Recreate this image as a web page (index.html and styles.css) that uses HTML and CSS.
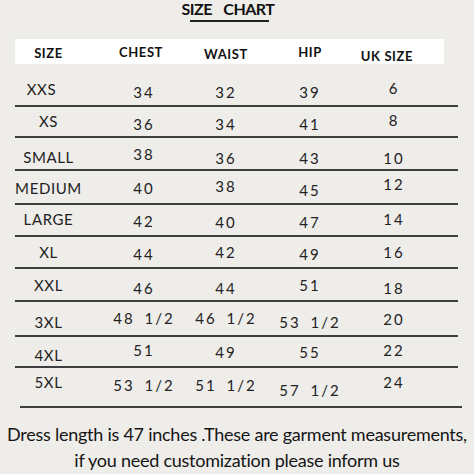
FILE: index.html
```html
<!DOCTYPE html>
<html>
<head>
  <title>Size Chart</title>
  <link rel="stylesheet" href="styles.css">
</head>
<body>
  <div class="title">SIZE CHART</div>
  <div class="title-rule"></div>

  <div class="chart">
    <div class="row head">
      <div class="c1 v8">SIZE</div>
      <div class="v7 nudge-chest">CHEST</div>
      <div class="v9">WAIST</div>
      <div class="v7">HIP</div>
      <div class="v11 nudge-uk">UK SIZE</div>
    </div>

    <div class="row h41">
      <div class="c1 v17 xxs">XXS</div>
      <div class="v20">34</div>
      <div class="v20">32</div>
      <div class="v20">39</div>
      <div class="v16">6</div>
    </div>
    <div class="row h29">
      <div class="c1 v6">XS</div>
      <div class="v9">36</div>
      <div class="v9">34</div>
      <div class="v9">41</div>
      <div class="v5">8</div>
    </div>
    <div class="row h31">
      <div class="c1 v11">SMALL</div>
      <div class="v8">38</div>
      <div class="v12">36</div>
      <div class="v12">43</div>
      <div class="v12">10</div>
    </div>
    <div class="row h32">
      <div class="c1 v9">MEDIUM</div>
      <div class="v9">40</div>
      <div class="v7">38</div>
      <div class="v11">45</div>
      <div class="v5">12</div>
    </div>
    <div class="row h30">
      <div class="c1 v6">LARGE</div>
      <div class="v8">42</div>
      <div class="v9">40</div>
      <div class="v9">47</div>
      <div class="v6">14</div>
    </div>
    <div class="row h30">
      <div class="c1 v7">XL</div>
      <div class="v9">44</div>
      <div class="v7">42</div>
      <div class="v9">49</div>
      <div class="v7">16</div>
    </div>
    <div class="row h31">
      <div class="c1 v8">XXL</div>
      <div class="v11">46</div>
      <div class="v11">44</div>
      <div class="v8">51</div>
      <div class="v11">18</div>
    </div>
    <div class="row h33">
      <div class="c1 v12">3XL</div>
      <div class="v8 half">48 1/2</div>
      <div class="v8 half">46 1/2</div>
      <div class="v12 half">53 1/2</div>
      <div class="v9">20</div>
    </div>
    <div class="row h29">
      <div class="c1 v10">4XL</div>
      <div class="v5">51</div>
      <div class="v7">49</div>
      <div class="v7">55</div>
      <div class="v5">22</div>
    </div>
    <div class="row h38 last">
      <div class="c1 v6">5XL</div>
      <div class="v9 half">53 1/2</div>
      <div class="v9 half">51 1/2</div>
      <div class="v14 half">57 1/2</div>
      <div class="v6">24</div>
    </div>
  </div>
  <div class="end-rule"></div>

  <p class="note">
    Dress length is 47 inches .These are garment measurements,<br>
    if you need customization please inform us
  </p>
</body>
</html>
```

FILE: styles.css
```css
body {
    margin: 0;
    width: 474px;
    height: 474px;
    overflow: hidden;
    background-color: #efedea;
    color: #222;
    font-family: "Lato", "Liberation Sans", sans-serif;
}

.title {
    width: 456px;
    padding-top: 1px;
    text-align: center;
    font-size: 16px;
    line-height: 16px;
    font-weight: bold;
    letter-spacing: -0.5px;
    word-spacing: 8px;
    color: #111;
}

.title-rule {
    width: 79px;
    height: 2px;
    margin: 3px 0 0 190px;
    background-color: #222;
}

.chart {
    margin: 17px 0 0 15px;
    width: 443px;
}

.row {
    display: grid;
    grid-template-columns: 89px 80px 84px 84px 84px;
    align-items: start;
    text-align: center;
    font-size: 15px;
    line-height: 16px;
    letter-spacing: 2px;
    border-bottom: 2px solid #3e3e3e;
}

.row > div {
    white-space: nowrap;
}

.row .c1 {
    padding-right: 22px;
    letter-spacing: 0.6px;
}

.row .xxs {
    padding-right: 36px;
}

.row .half {
    word-spacing: 4px;
}

.row.head {
    width: 429px;
    height: 25px;
    background-color: #fff;
    border-bottom: none;
    font-size: 13px;
    line-height: 13px;
    font-weight: bold;
    letter-spacing: 0.6px;
    color: #111;
}

.nudge-chest {
    padding-right: 6px;
}

.nudge-uk {
    padding-right: 14px;
}

.row.last {
    border-bottom: none;
}

.h29 { height: 29px; }
.h30 { height: 30px; }
.h31 { height: 31px; }
.h32 { height: 32px; }
.h33 { height: 33px; }
.h38 { height: 38px; }
.h41 { height: 41px; }

.v5 { margin-top: 5px; }
.v6 { margin-top: 6px; }
.v7 { margin-top: 7px; }
.v8 { margin-top: 8px; }
.v9 { margin-top: 9px; }
.v10 { margin-top: 10px; }
.v11 { margin-top: 11px; }
.v12 { margin-top: 12px; }
.v14 { margin-top: 14px; }
.v16 { margin-top: 16px; }
.v17 { margin-top: 17px; }
.v20 { margin-top: 20px; }

.end-rule {
    width: 442px;
    height: 2px;
    margin-left: 20px;
    background-color: #3e3e3e;
}

.note {
    margin: 13px 0 0 0;
    text-align: center;
    white-space: nowrap;
    font-size: 18px;
    line-height: 26px;
    letter-spacing: -0.25px;
    color: #151515;
}
```
